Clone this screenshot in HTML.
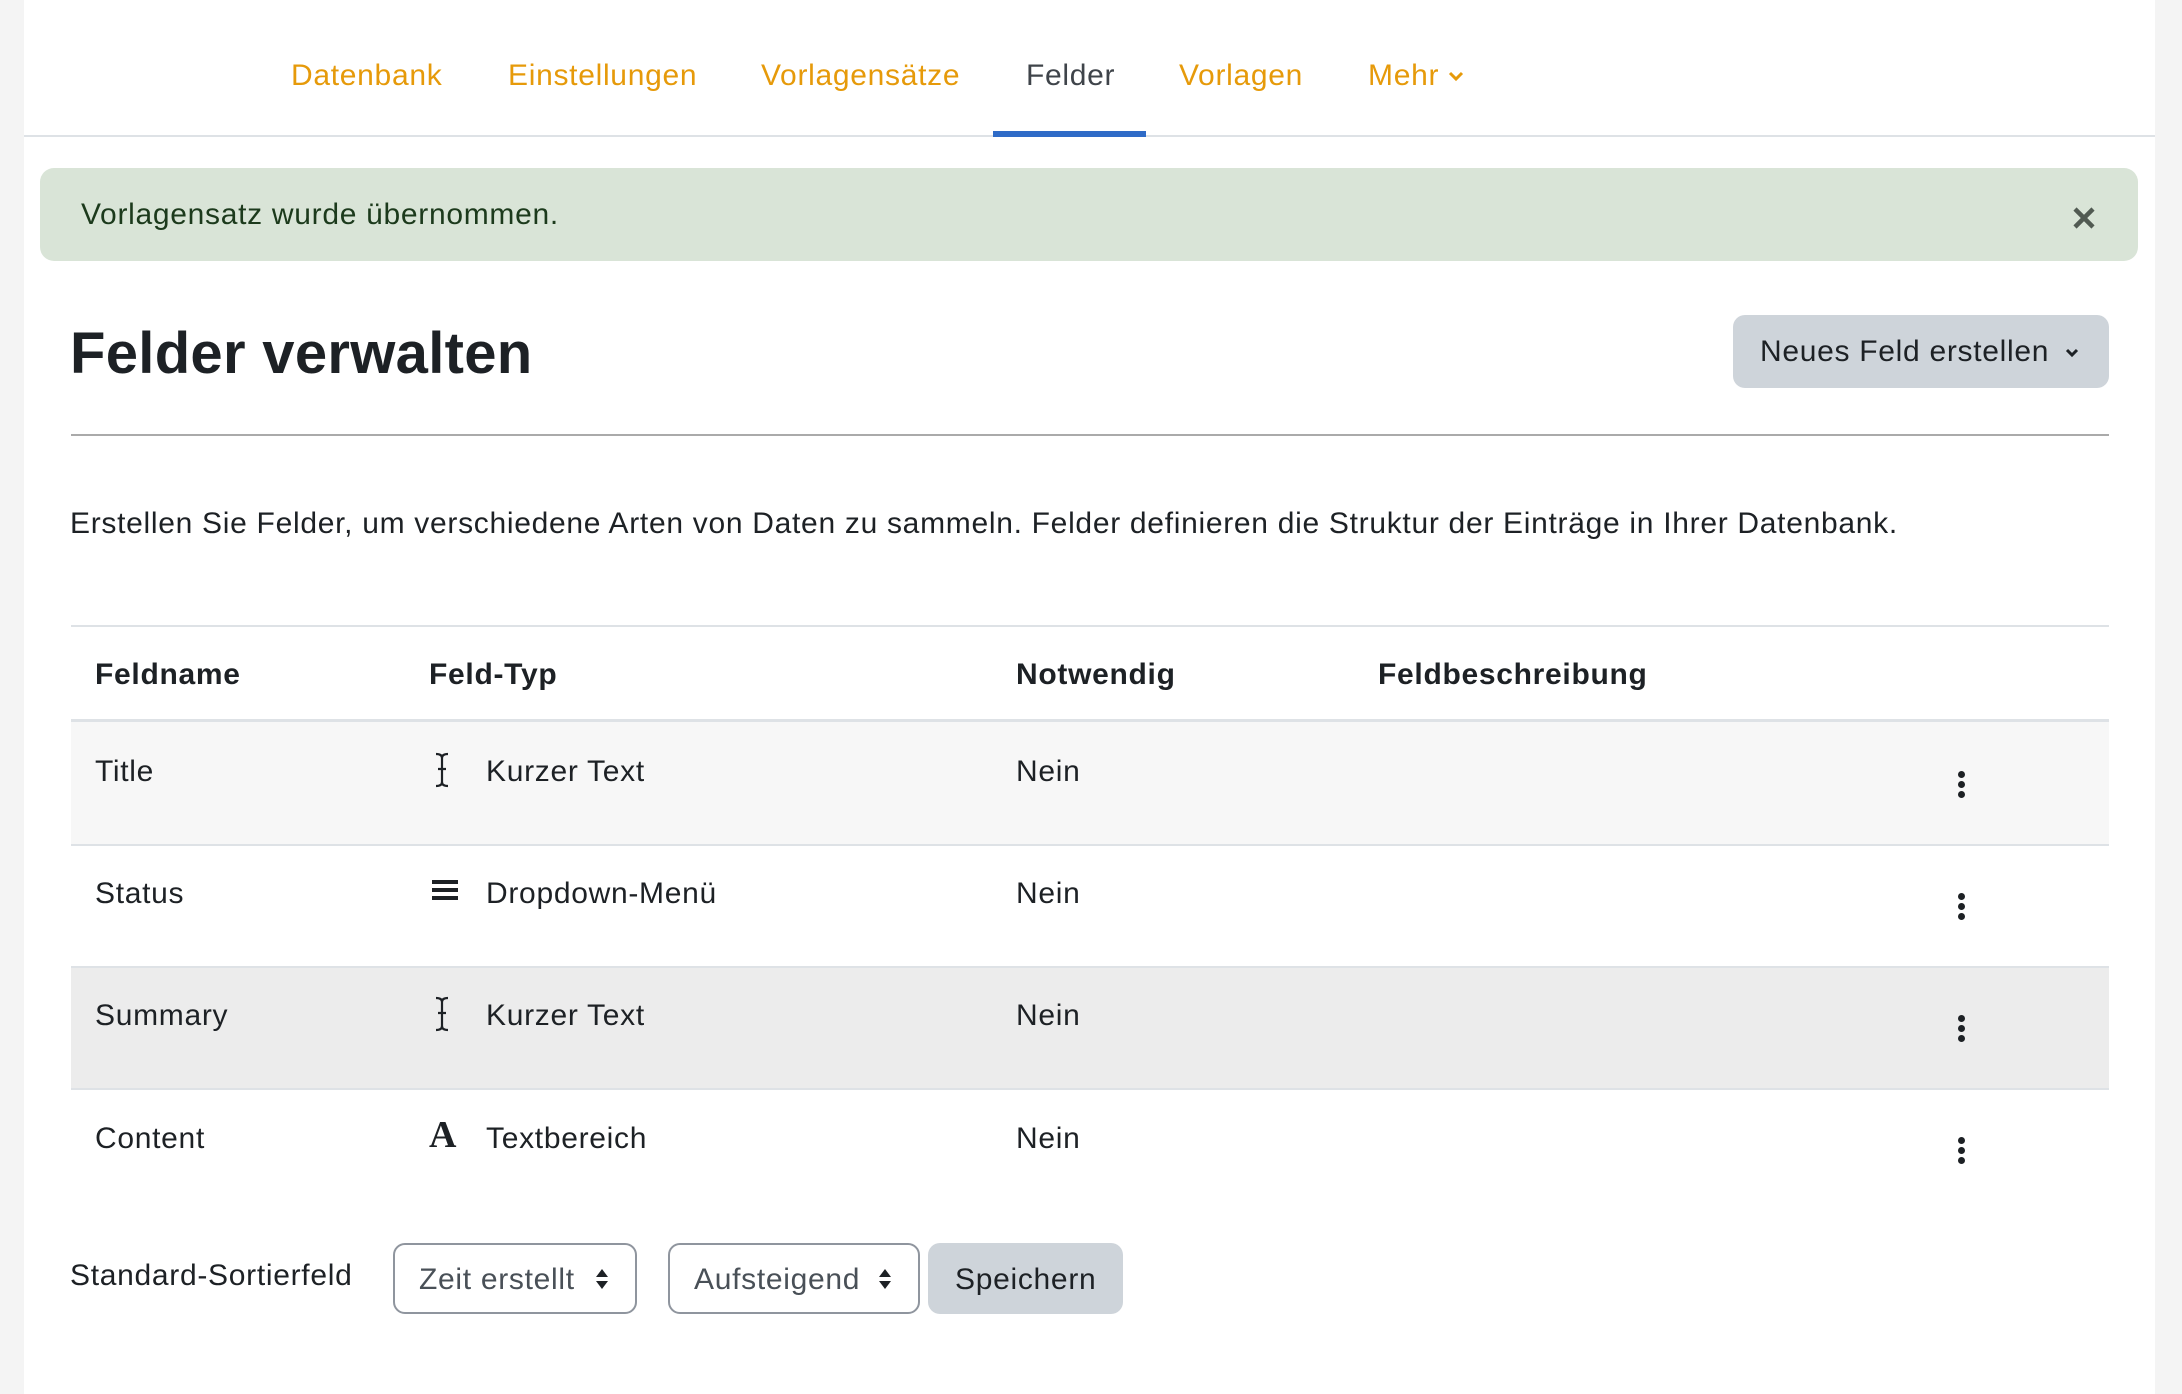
<!DOCTYPE html>
<html><head><meta charset="utf-8"><style>
*{box-sizing:border-box;margin:0;padding:0}
body{width:2182px;height:1394px;background:#f4f4f4;font-family:"Liberation Sans",sans-serif;color:#1d2125;position:relative;overflow:hidden}
.main{position:absolute;left:24px;top:0;width:2131px;height:1394px;background:#fff}
.a{position:absolute;white-space:nowrap}
.nav{font-size:30px;letter-spacing:0.7px;color:#e69a0a;top:59px}
.t{font-size:30px;letter-spacing:0.7px;line-height:1}
.row{position:absolute;left:71px;width:2038px;border-bottom:2px solid #dee2e6}
.keb{position:absolute;left:1958px;width:7px}
.keb i{display:block;width:7px;height:7px;border-radius:50%;background:#1d2125;margin-bottom:3px}
</style></head><body>
<div class="main"></div>
<div class="a nav" style="left:291px">Datenbank</div>
<div class="a nav" style="left:508px">Einstellungen</div>
<div class="a nav" style="left:761px">Vorlagensätze</div>
<div class="a nav" style="left:1026px;color:#3f444a">Felder</div>
<div class="a nav" style="left:1179px">Vorlagen</div>
<div class="a nav" style="left:1368px">Mehr</div>
<svg class="a" style="left:1448px;top:70px" width="16" height="12" viewBox="0 0 16 12"><path d="M2 3l6 6 6-6" stroke="#e69a0a" stroke-width="3" fill="none"/></svg>
<div class="a" style="left:24px;top:135px;width:2131px;height:2px;background:#dee2e6"></div>
<div class="a" style="left:993px;top:131px;width:153px;height:6px;background:#2f6bc7"></div>

<div class="a" style="left:40px;top:168px;width:2098px;height:93px;background:#d9e4d7;border-radius:14px"></div>
<div class="a t" style="left:81px;top:200px;color:#1c3a1c">Vorlagensatz wurde übernommen.</div>
<svg class="a" style="left:2072px;top:206px" width="24" height="24" viewBox="0 0 24 24"><path d="M3 3l18 18M21 3L3 21" stroke="#515a52" stroke-width="4.5"/></svg>

<div class="a" style="left:70px;top:320px;font-size:58px;letter-spacing:0.3px;font-weight:bold;color:#1d2125">Felder verwalten</div>
<div class="a" style="left:1733px;top:315px;width:376px;height:73px;background:#ced4da;border-radius:12px"></div>
<div class="a t" style="left:1760px;top:337px">Neues Feld erstellen</div>
<svg class="a" style="left:2064px;top:347px" width="16" height="12" viewBox="0 0 16 12"><path d="M3 3l5 5 5-5" stroke="#1d2125" stroke-width="3" fill="none"/></svg>
<div class="a" style="left:71px;top:434px;width:2038px;height:2px;background:#aaa"></div>

<div class="a t" style="left:70px;top:509px">Erstellen Sie Felder, um verschiedene Arten von Daten zu sammeln. Felder definieren die Struktur der Einträge in Ihrer Datenbank.</div>

<div class="a" style="left:71px;top:625px;width:2038px;height:2px;background:#dee2e6"></div>
<div class="a t" style="left:95px;top:660px;font-weight:bold">Feldname</div>
<div class="a t" style="left:429px;top:660px;font-weight:bold">Feld-Typ</div>
<div class="a t" style="left:1016px;top:660px;font-weight:bold">Notwendig</div>
<div class="a t" style="left:1378px;top:660px;font-weight:bold">Feldbeschreibung</div>
<div class="a" style="left:71px;top:719px;width:2038px;height:3px;background:#dee2e6"></div>

<div class="row" style="top:722px;height:124px;background:#f7f7f7"></div>
<div class="row" style="top:846px;height:122px"></div>
<div class="row" style="top:968px;height:122px;background:#ececec"></div>

<div class="a t" style="left:95px;top:757px">Title</div>
<div class="a t" style="left:95px;top:879px">Status</div>
<div class="a t" style="left:95px;top:1001px">Summary</div>
<div class="a t" style="left:95px;top:1124px">Content</div>

<svg class="a" style="left:432px;top:752px" width="20" height="36" viewBox="0 0 20 36"><path d="M4 2q6 0 6 4v24q0 4-6 4M16 2q-6 0-6 4v24q0 4 6 4M6 17h8" stroke="#1d2125" stroke-width="2.2" fill="none"/></svg>
<svg class="a" style="left:432px;top:878px" width="26" height="24" viewBox="0 0 26 24"><path d="M0 4h26M0 12h26M0 20h26" stroke="#1d2125" stroke-width="4"/></svg>
<svg class="a" style="left:432px;top:996px" width="20" height="36" viewBox="0 0 20 36"><path d="M4 2q6 0 6 4v24q0 4-6 4M16 2q-6 0-6 4v24q0 4 6 4M6 17h8" stroke="#1d2125" stroke-width="2.2" fill="none"/></svg>
<div class="a" style="left:429px;top:1116px;font-family:'Liberation Serif',serif;font-weight:bold;font-size:38px;line-height:1">A</div>

<div class="a t" style="left:486px;top:757px">Kurzer Text</div>
<div class="a t" style="left:486px;top:879px">Dropdown-Menü</div>
<div class="a t" style="left:486px;top:1001px">Kurzer Text</div>
<div class="a t" style="left:486px;top:1124px">Textbereich</div>

<div class="a t" style="left:1016px;top:757px">Nein</div>
<div class="a t" style="left:1016px;top:879px">Nein</div>
<div class="a t" style="left:1016px;top:1001px">Nein</div>
<div class="a t" style="left:1016px;top:1124px">Nein</div>

<div class="keb" style="top:771px"><i></i><i></i><i></i></div>
<div class="keb" style="top:893px"><i></i><i></i><i></i></div>
<div class="keb" style="top:1015px"><i></i><i></i><i></i></div>
<div class="keb" style="top:1137px"><i></i><i></i><i></i></div>

<div class="a t" style="left:70px;top:1261px">Standard-Sortierfeld</div>
<div class="a" style="left:393px;top:1243px;width:244px;height:71px;border:2px solid #8f959e;border-radius:12px"></div>
<div class="a t" style="left:419px;top:1265px;color:#495057">Zeit erstellt</div>
<svg class="a" style="left:594px;top:1267px" width="16" height="24" viewBox="0 0 16 24"><path d="M2 10L8 2l6 8zM2 14l6 8 6-8z" fill="#1d2125"/></svg>
<div class="a" style="left:668px;top:1243px;width:252px;height:71px;border:2px solid #8f959e;border-radius:12px"></div>
<div class="a t" style="left:694px;top:1265px;color:#495057">Aufsteigend</div>
<svg class="a" style="left:877px;top:1267px" width="16" height="24" viewBox="0 0 16 24"><path d="M2 10L8 2l6 8zM2 14l6 8 6-8z" fill="#1d2125"/></svg>
<div class="a" style="left:928px;top:1243px;width:195px;height:71px;background:#ced4da;border-radius:12px"></div>
<div class="a t" style="left:955px;top:1265px">Speichern</div>
</body></html>
